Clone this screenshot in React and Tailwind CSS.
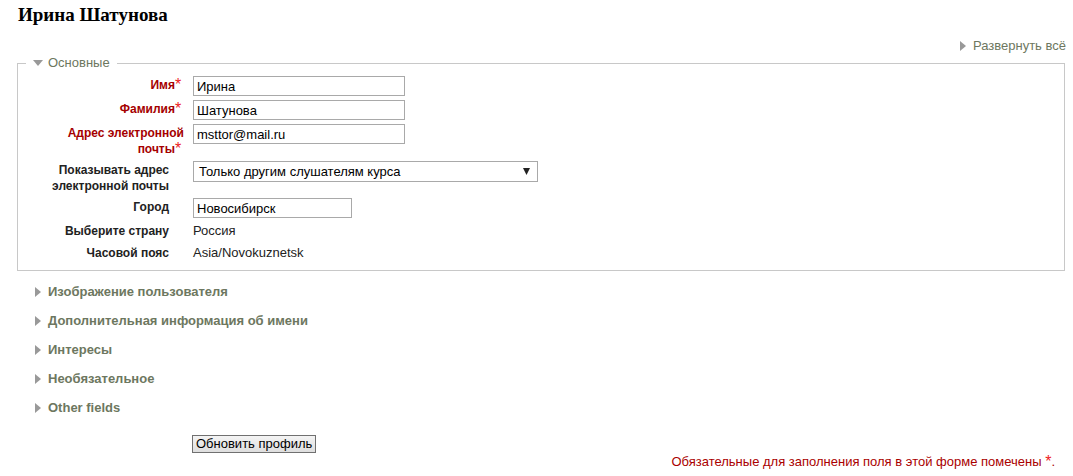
import React from 'react';

const sans = { fontFamily: '"Liberation Sans", Arial, sans-serif' };

const RightTri = () => (
  <svg width="6" height="10" viewBox="0 0 6 10" className="shrink-0">
    <path d="M0 0 L6 5 L0 10 Z" fill="#999999" />
  </svg>
);

const DownTri = () => (
  <svg width="10" height="6" viewBox="0 0 10 6" className="shrink-0">
    <path d="M0 0 L10 0 L5 6 Z" fill="#999999" />
  </svg>
);

const Star = () => (
  <span className="inline-block w-[9px] text-left text-[16px] leading-4 align-top font-normal text-[#ee2222]">*</span>
);

const Label = ({ children, required }) => (
  <div
    className={`w-[150px] shrink-0 text-right font-bold text-[12px] leading-4 pt-[1px] ${
      required ? 'text-[#a50000]' : 'pr-[15px] text-[#222]'
    }`}
  >
    {children}
    {required && <Star />}
  </div>
);

const TextInput = ({ value, width }) => (
  <input
    readOnly
    value={value}
    className={`${width} h-[20px] border border-[#a9a9a9] bg-white px-[3px] text-[13px] text-black outline-none`}
    style={sans}
  />
);

const collapsed = [
  'Изображение пользователя',
  'Дополнительная информация об имени',
  'Интересы',
  'Необязательное',
  'Other fields',
];

export default function App() {
  return (
    <div className="w-[1073px] h-[476px] bg-white overflow-hidden text-[13px] text-[#222]" style={sans}>
      <h2
        className="pl-[18px] pt-[5px] text-[19px] font-bold leading-5 text-black"
        style={{ fontFamily: '"Liberation Serif", "Times New Roman", serif' }}
      >
        Ирина Шатунова
      </h2>

      <div className="flex justify-end items-center gap-[7px] pr-[7px] mt-[13px] h-4 text-[#6d7760]">
        <RightTri />
        <span>Развернуть всё</span>
      </div>

      <fieldset className="ml-[17px] mr-[8px] mt-[1px] border border-[#c8c8c8] pl-[16px] pr-[8px] pt-[5px] pb-[9px]">
        <legend className="-ml-[8px] px-[7px] flex items-center gap-[5px] leading-4 text-[#6d7760]">
          <DownTri />
          <span>Основные</span>
        </legend>

        <div className="flex flex-col gap-[4px]">
          <div className="flex items-start">
            <Label required>Имя</Label>
            <div className="ml-[9px]">
              <TextInput value="Ирина" width="w-[212px]" />
            </div>
          </div>
          <div className="flex items-start">
            <Label required>Фамилия</Label>
            <div className="ml-[9px]">
              <TextInput value="Шатунова" width="w-[212px]" />
            </div>
          </div>
          <div className="flex items-start">
            <Label required>Адрес электронной почты</Label>
            <div className="ml-[9px]">
              <TextInput value="msttor@mail.ru" width="w-[212px]" />
            </div>
          </div>
          <div className="flex items-start">
            <Label>Показывать адрес электронной почты</Label>
            <div className="ml-[9px] relative">
              <div className="w-[345px] h-[21px] border border-[#a9a9a9] bg-white pl-[5px] flex items-center text-[13px] text-black">
                Только другим слушателям курса
              </div>
              <svg width="7" height="7" viewBox="0 0 7 7" className="absolute right-[8px] top-[7px]">
                <path d="M0 0 L7 0 L3.5 7 Z" fill="#222" />
              </svg>
            </div>
          </div>
          <div className="flex items-start">
            <Label>Город</Label>
            <div className="ml-[9px]">
              <TextInput value="Новосибирск" width="w-[159px]" />
            </div>
          </div>
          <div className="flex items-start">
            <Label>Выберите страну</Label>
            <div className="ml-[9px] leading-4 pt-[1px] text-[#222]">Россия</div>
          </div>
          <div className="flex items-start mt-[1px]">
            <Label>Часовой пояс</Label>
            <div className="ml-[9px] leading-4 pt-[1px] text-[#222]">Asia/Novokuznetsk</div>
          </div>
        </div>
      </fieldset>

      <div className="mt-[13px] pl-[35px] flex flex-col">
        {collapsed.map((t) => (
          <div key={t} className="h-[29px] flex items-start">
            <div className="flex items-center gap-[7px] h-4 font-bold text-[#6d7760]">
              <RightTri />
              <span>{t}</span>
            </div>
          </div>
        ))}
      </div>

      <div className="pl-[192px] mt-[5px]">
        <button
          className="h-[18px] px-[3px] border border-[#707070] bg-gradient-to-b from-[#f4f4f4] to-[#dedede] text-[13px] leading-4 text-black"
          style={sans}
        >
          Обновить профиль
        </button>
      </div>

      <div className="flex justify-end pr-[18px] leading-4 text-[#aa0000]">
        <span>
          Обязательные для заполнения поля в этой форме помечены{' '}
          <span className="text-[16px] leading-4 align-top text-[#ee2222]">*</span>.
        </span>
      </div>
    </div>
  );
}
